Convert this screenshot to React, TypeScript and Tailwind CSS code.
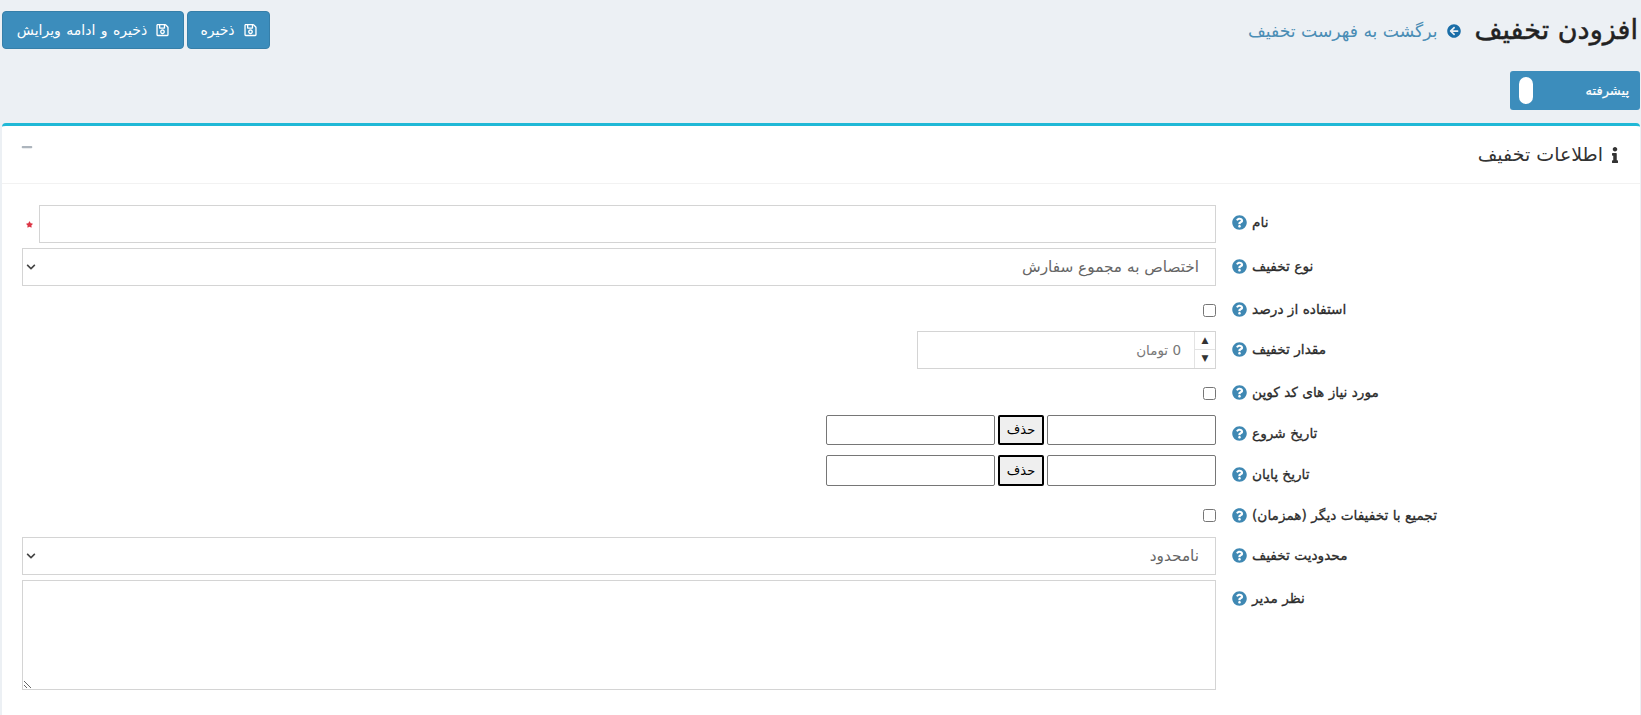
import React from 'react';
import { FaArrowCircleLeft, FaChevronDown, FaInfo, FaMinus, FaQuestionCircle, FaRegSave, FaStar } from 'react-icons/fa';

const Row: React.FC<{ label: string; rowClass: string; labelClass: string; children: React.ReactNode }> = ({
  label,
  rowClass,
  labelClass,
  children,
}) => (
  <div className={`flex items-start ${rowClass}`}>
    <div className={`w-[424px] shrink-0 pl-4 flex justify-end items-center gap-[5px] ${labelClass}`}>
      <span className="text-[13.7px] leading-5 text-[#2b2b2b] whitespace-nowrap [-webkit-text-stroke:0.3px]">{label}</span>
      <FaQuestionCircle className="w-[15px] h-[15px] text-[#3f88b3] shrink-0" />
    </div>
    <div className="flex-1 min-w-0">{children}</div>
  </div>
);

const SaveButton: React.FC<{ text: string; widthClass: string }> = ({ text, widthClass }) => (
  <button className={`h-[38px] flex items-center justify-center gap-[9px] rounded-[4px] bg-[#3c8dbc] border border-[#367fa9] text-white text-[14px] whitespace-nowrap [word-spacing:1px] ${widthClass}`}>
    <FaRegSave className="w-[13px] h-[14px]" />
    <span>{text}</span>
  </button>
);

const DateRow: React.FC<{ heightClass: string }> = ({ heightClass }) => (
  <div className={`flex gap-[3px] ${heightClass}`}>
    <input className="w-[169px] border border-[#767676] rounded-[2px] bg-white" />
    <button className="w-[46px] border-2 border-black bg-[#efefef] text-[13px] text-black rounded-[2px]">حذف</button>
    <input className="w-[169px] border border-[#767676] rounded-[2px] bg-white" />
  </div>
);

const Select: React.FC<{ text: string }> = ({ text }) => (
  <div className="relative">
    <select className="appearance-none block w-full h-[38px] border border-[#d4d4d4] bg-white text-[15.3px] text-[#666] pr-[16px]">
      <option>{text}</option>
    </select>
    <FaChevronDown className="absolute left-[4px] top-[14px] w-[10px] h-[10px] text-[#444]" />
  </div>
);

export default function App() {
  return (
    <div dir="rtl" className="h-[715px] overflow-hidden bg-[#ecf0f4] pr-px pl-[2px] font-['DejaVu_Sans',sans-serif]">
      <div className="flex justify-between items-start pt-[11px] h-[49px]">
        <div className="flex items-center h-[38px]">
          <h1 className="text-[27px] text-[#222] whitespace-nowrap mr-[2px] pt-[1px] [-webkit-text-stroke:0.5px]">افزودن تخفیف</h1>
          <FaArrowCircleLeft className="w-[14px] h-[14px] text-[#1a6ea8] mr-[14px] ml-[9px] mt-[2px]" />
          <a className="text-[17.2px] text-[#4a8db5] whitespace-nowrap pt-[3px]">برگشت به فهرست تخفیف</a>
        </div>
        <div className="flex gap-[3px]">
          <SaveButton text="ذخیره" widthClass="w-[83px]" />
          <SaveButton text="ذخیره و ادامه ویرایش" widthClass="w-[182px]" />
        </div>
      </div>

      <div className="mt-[22px] w-[130px] h-[39px] rounded-[3px] bg-[#3c8dbc] flex items-center justify-between pr-[11px] pl-[9px]">
        <span className="text-[13px] text-white [-webkit-text-stroke:0.2px]">پیشرفته</span>
        <span className="w-[14px] h-[27px] rounded-full bg-white" />
      </div>

      <div className="mt-[13px] h-[600px] bg-white border-t-[3px] border-[#20b8d6] rounded-[4px]">
        <div className="h-[58px] border-b border-[#f2f2f2] flex justify-between items-start pr-[20px] pl-[19px]">
          <div className="flex items-center gap-[7px] pt-[14px]">
            <FaInfo className="w-[10px] h-[16px] text-[#333] mt-[2px]" />
            <span className="text-[19px] text-[#333] whitespace-nowrap">اطلاعات تخفیف</span>
          </div>
          <FaMinus className="w-[12px] h-[12px] text-[#adb5bd] mt-[15px]" />
        </div>

        <div className="pt-[21px] pl-[20px]">
          <Row label="نام" rowClass="h-[38px]" labelClass="pt-[7px]">
            <div className="flex items-center gap-[6px]">
              <input className="flex-1 h-[38px] border border-[#d4d4d4] bg-white" />
              <FaStar className="w-[7px] h-[7px] text-[#dc3545] ml-[4px] shrink-0" />
            </div>
          </Row>
          <Row label="نوع تخفیف" rowClass="h-[38px] mt-[5px]" labelClass="pt-[8px]">
            <Select text="اختصاص به مجموع سفارش" />
          </Row>
          <Row label="استفاده از درصد" rowClass="h-[45px]" labelClass="pt-[13px]">
            <input type="checkbox" className="block w-[13px] h-[13px] mt-[18px]" />
          </Row>
          <Row label="مقدار تخفیف" rowClass="h-[38px]" labelClass="pt-[8px]">
            <div className="w-[299px] h-[38px] border border-[#d4d4d4] flex bg-white">
              <div className="w-[21px] shrink-0 border-l border-[#e3e3e3] flex flex-col text-[#333]">
                <span className="h-[18px] border-b border-[#e3e3e3] flex items-center justify-center text-[9px]">▲</span>
                <span className="flex-1 flex items-center justify-center text-[9px]">▼</span>
              </div>
              <span className="pr-[13px] pt-[8px] text-[13.5px] text-[#777]">0 تومان</span>
            </div>
          </Row>
          <Row label="مورد نیاز های کد کوپن" rowClass="h-[46px]" labelClass="pt-[13px]">
            <input type="checkbox" className="block w-[13px] h-[13px] mt-[18px]" />
          </Row>
          <Row label="تاریخ شروع" rowClass="h-[30px]" labelClass="pt-[8px]">
            <DateRow heightClass="h-[30px]" />
          </Row>
          <Row label="تاریخ پایان" rowClass="h-[31px] mt-[10px]" labelClass="pt-[9px]">
            <DateRow heightClass="h-[31px]" />
          </Row>
          <Row label="تجمیع با تخفیفات دیگر (همزمان)" rowClass="h-[51px]" labelClass="pt-[19px]">
            <input type="checkbox" className="block w-[13px] h-[13px] mt-[23px]" />
          </Row>
          <Row label="محدودیت تخفیف" rowClass="h-[38px]" labelClass="pt-[8px]">
            <Select text="نامحدود" />
          </Row>
          <Row label="نظر مدیر" rowClass="h-[110px] mt-[5px]" labelClass="pt-[8px]">
            <textarea className="block w-full h-[110px] border border-[#d4d4d4] bg-white" />
          </Row>
        </div>
      </div>
    </div>
  );
}
